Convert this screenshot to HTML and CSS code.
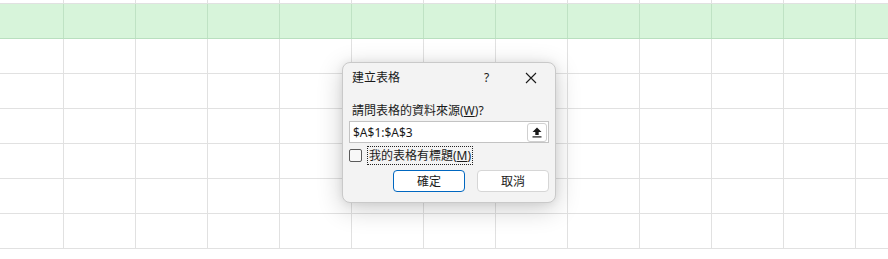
FILE: index.html
```html
<!DOCTYPE html>
<html lang="zh-Hant">
<head>
    <meta charset="UTF-8">
    <meta name="viewport" content="width=device-width, initial-scale=1.0">
    <title>建立表格</title>
    <link rel="stylesheet" href="styles.css">
</head>
<body>
    <div class="sheet" id="sheet"></div>

    <div class="dialog">
        <div class="title-bar">
            <span class="title">建立表格</span>
            <span class="help">?</span>
            <span class="close">
                <svg width="12" height="12" viewBox="0 0 12 12">
                    <path d="M1 1 L11 11 M11 1 L1 11" stroke="#1a1a1a" stroke-width="1.1" fill="none"/>
                </svg>
            </span>
        </div>
        <div class="dialog-body">
            <p class="prompt">請問表格的資料來源(<u>W</u>)?</p>
            <div class="range-input">
                <span class="range-text">$A$1:$A$3</span>
                <span class="collapse-btn">
                    <svg width="10" height="11" viewBox="0 0 10 11">
                        <path d="M5 0.5 L9.5 5 H6.7 V8 H3.3 V5 H0.5 Z" fill="#1a1a1a"/>
                        <rect x="0.5" y="9.3" width="9" height="1.2" fill="#1a1a1a"/>
                    </svg>
                </span>
            </div>
            <div class="check-row">
                <span class="checkbox"></span>
                <span class="check-label">我的表格有標題(<u>M</u>)</span>
            </div>
            <div class="buttons">
                <button class="btn primary">確定</button>
                <button class="btn">取消</button>
            </div>
        </div>
    </div>

    <script>
        const sheet = document.getElementById("sheet");
        const rowCount = 8;
        const colCount = 13;

        // Filas de la hoja: la segunda fila va seleccionada en verde
        for (let r = 0; r < rowCount; r++) {
            const row = document.createElement("div");
            row.className = "row";
            if (r === 0) row.classList.add("top");
            if (r === 1) row.classList.add("selected");
            for (let c = 0; c < colCount; c++) {
                const cell = document.createElement("div");
                cell.className = c === 0 ? "cell first" : "cell";
                row.appendChild(cell);
            }
            sheet.appendChild(row);
        }
    </script>
</body>
</html>
```

FILE: styles.css
```css
body {
    margin: 0;
    background-color: white;
    font-family: "Noto Sans", "Noto Sans CJK TC", sans-serif;
    font-size: 12px;
    color: #1a1a1a;
    overflow: hidden;
}
.sheet {
    width: 888px;
    height: 259px;
    overflow: hidden;
}
.row {
    display: flex;
    height: 34px;
    border-bottom: 1px solid #e1e1e1;
}
.row.top {
    height: 3px;
}
.row.selected {
    background-color: #d7f4da;
    border-bottom-color: #b9dfbf;
}
.cell {
    flex: none;
    width: 71px;
    border-right: 1px solid #e1e1e1;
}
.cell.first {
    width: 63px;
}
.row.selected .cell {
    border-right-color: #bfe2c4;
}
.dialog {
    position: absolute;
    left: 342px;
    top: 62px;
    width: 212px;
    height: 139px;
    background-color: #f3f3f3;
    border: 1px solid #c9c9c9;
    border-radius: 8px;
    box-shadow: 0 6px 26px rgba(0, 0, 0, 0.2), 0 0 8px rgba(0, 0, 0, 0.07);
}
.title-bar {
    display: flex;
    align-items: center;
    height: 27px;
    padding-left: 9px;
}
.title {
    flex: 1;
    padding-top: 1px;
}
.help {
    width: 12px;
    margin-right: 29px;
    padding-top: 2px;
    font-size: 12px;
}
.close {
    display: flex;
    margin-right: 18px;
    padding-top: 2px;
}
.dialog-body {
    padding: 0 6px 0 6px;
}
.prompt {
    margin: 12px 0 0 3px;
    line-height: 17px;
}
.range-input {
    display: flex;
    align-items: center;
    justify-content: space-between;
    height: 20px;
    margin-top: 2px;
    background-color: white;
    border: 1px solid #c3c3c3;
}
.range-text {
    padding-left: 3px;
    font-size: 12px;
}
.collapse-btn {
    display: flex;
    align-items: center;
    justify-content: center;
    width: 18px;
    height: 17px;
    margin-right: 1px;
    border: 1px solid #d0d0d0;
    border-radius: 3px;
    background-color: white;
}
.check-row {
    display: flex;
    align-items: center;
    margin-top: 3px;
    height: 19px;
}
.checkbox {
    width: 11px;
    height: 11px;
    border: 1px solid #5a5a5a;
    border-radius: 2px;
    background-color: #f8f8f8;
}
.check-label {
    margin-left: 5px;
    padding: 0 1px;
    line-height: 17px;
    border: 1px dotted #222;
}
.buttons {
    display: flex;
    justify-content: flex-end;
    gap: 12px;
    margin-top: 5px;
}
.btn {
    width: 72px;
    height: 22px;
    padding: 0;
    font-family: inherit;
    font-size: 12px;
    color: #1a1a1a;
    background-color: white;
    border: 1px solid #d6d6d6;
    border-radius: 4px;
}
.btn.primary {
    border-color: #0067c0;
}
```
